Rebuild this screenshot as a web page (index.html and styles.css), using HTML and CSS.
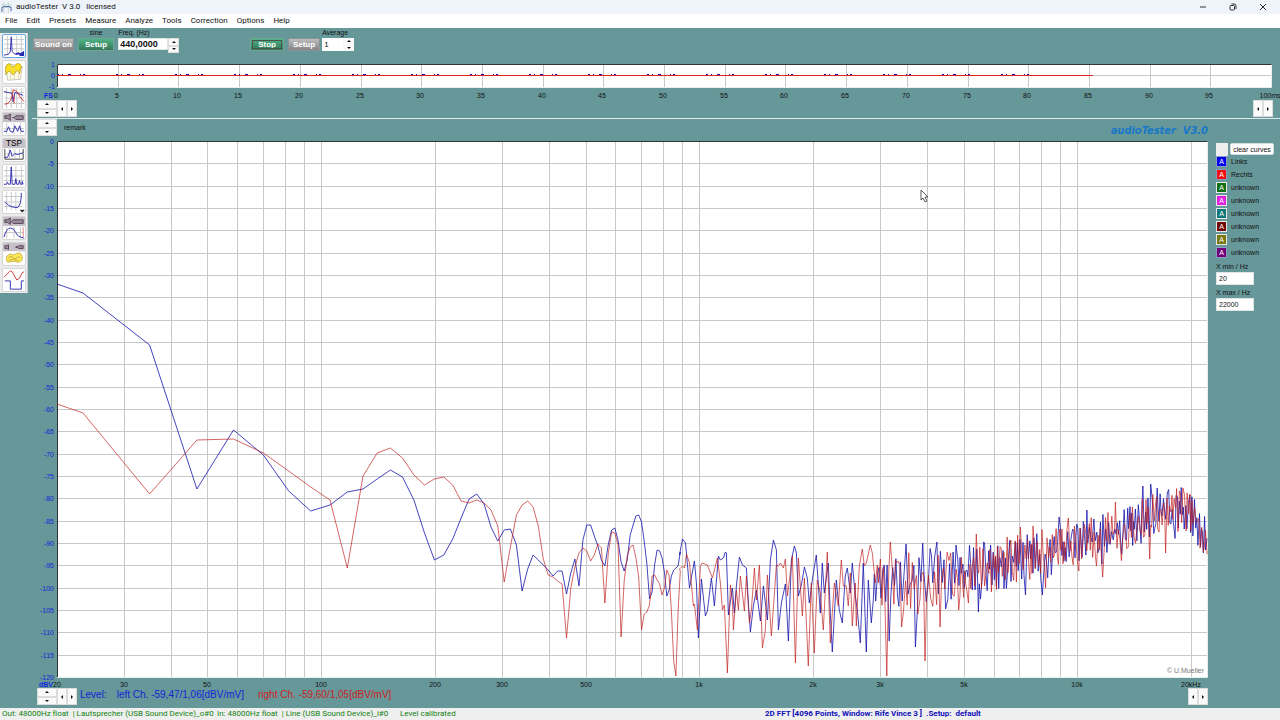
FILE: index.html
```html
<!DOCTYPE html>
<html lang="en">
    <head>
        <meta charset="UTF-8" />
        <meta name="viewport" content="width=device-width, initial-scale=1.0" />
        <title>audioTester V 3.0</title>
        <link rel="stylesheet" href="styles.css">
    </head>
    <body>
        <div class="app">
            <header class="titlebar">
                <svg class="app-logo" viewBox="0 0 12 12">
                    <path d="M0 3h12M0 6h12M3 0v12M8 0v12" stroke="#c3d8c8" />
                    <path d="M1 11V7q0-2 2-2h6q2 0 2 2v3" fill="none" stroke="#3858a8" />
                </svg>
                <h1 class="app-title">audioTester&nbsp; V 3.0&nbsp;&nbsp; licensed</h1>
                <div class="window-buttons">
                    <button aria-label="Minimize"><svg viewBox="0 0 8 8"><path d="M1 4h6" /></svg></button>
                    <button aria-label="Restore"><svg viewBox="0 0 8 8"><rect x="1" y="2.5" width="4.5" height="4.5" rx="1" /><path d="M2.5 1H5q2 0 2 2v3" /></svg></button>
                    <button aria-label="Close"><svg viewBox="0 0 8 8"><path d="M1 1l6 6M7 1l-6 6" /></svg></button>
                </div>
            </header>

            <nav class="menubar">
                <a href="#">File</a>
                <a href="#">Edit</a>
                <a href="#">Presets</a>
                <a href="#">Measure</a>
                <a href="#">Analyze</a>
                <a href="#">Tools</a>
                <a href="#">Correction</a>
                <a href="#">Options</a>
                <a href="#">Help</a>
            </nav>

            <main class="main">
                <aside class="toolbar">
                    <button class="tool tool-active" aria-label="FFT">
                        <svg viewBox="0 0 24 24">
                            <path class="grid" d="M5 1v20M15 1v20M20 1v20M1 5h22M1 10h22M1 15h22" />
                            <path class="blue" d="M1 22l5-1 2-3 1-16 1 16 3 3 3-1" />
                            <path class="blue thick" d="M14 21l3-1 2 1 3-2v3h-4" />
                        </svg>
                    </button>
                    <button class="tool" aria-label="Waterfall">
                        <svg viewBox="0 0 24 24">
                            <path d="M3 6l3-3 15 3-2 14-14 1z" fill="#fffbe0" stroke="#999" stroke-width=".6" />
                            <path d="M3 7q2-6 5-3 3 4 5 1 3-4 6-1 2 2 0 5l-1 5q-2-6-4-2-3 5-5 1-3-4-6 2z" fill="#ffe21c" stroke="#a88c00" stroke-width=".7" />
                            <path d="M9 6l-1 14M13 7l-1 13M17 14v5" stroke="#bbb" stroke-width=".6" />
                        </svg>
                    </button>
                    <button class="tool" aria-label="Impedance">
                        <svg viewBox="0 0 24 24">
                            <path class="grid" d="M4 1v22M9 1v22M15 1v22M20 1v22M1 6h22M1 12h22M1 18h22" />
                            <path class="blue" d="M1 5l9 2 1 9 2-10 9 3" />
                            <path class="red" d="M2 19q8-1 9-16 5 1 7 7l5 6" />
                            <path class="red" d="M12 9v9" />
                        </svg>
                    </button>
                    <button class="tool" aria-label="Speaker response">
                        <svg viewBox="0 0 24 24">
                            <rect class="head" width="24" height="10" />
                            <path class="device" d="M2 3h3l3-2v7L5 6H2zM10 5h2l2-2h8v4h-8l-2-2" />
                            <path class="grid" d="M4 11v12M12 11v12M19 11v12M1 17h22" />
                            <path class="blue" d="M1 20h3l2-5 2 5 3 1 2-7 3 6 2-6 2 6h3" />
                        </svg>
                    </button>
                    <button class="tool" aria-label="Thiele Small parameters">
                        <svg viewBox="0 0 24 24">
                            <rect class="head" width="24" height="10" />
                            <text x="12" y="8" text-anchor="middle">TSP</text>
                            <path d="M2 11v11h20V11" fill="none" stroke="#333" />
                            <path class="grid" d="M7 11v10M13 11v10M18 11v10M2 16h20" />
                            <path class="blue" d="M2 20h3l3-8 2 7 3-3 3 1 6-2" />
                        </svg>
                    </button>
                    <button class="tool" aria-label="Distortion">
                        <svg viewBox="0 0 24 24">
                            <path class="grid" d="M4 1v20M14 1v20M20 1v20M1 6h22M1 12h22M1 17h22" />
                            <path class="blue" d="M1 21h3l1-2 1 2h2l1-19 1 19h3l1-6 1 6h2l1-4 1 4h2v-3l1 3" />
                        </svg>
                    </button>
                    <button class="tool" aria-label="Sweep">
                        <svg viewBox="0 0 24 24">
                            <path class="grid" d="M4 1v20M9 1v20M14 1v20M1 6h20M1 12h20M1 17h20" />
                            <path class="blue" d="M2 12q4 4 7 5t7 1q4-3 4-16" />
                            <path d="M19 21h4l-2 2z" fill="#222" stroke="#222" />
                        </svg>
                    </button>
                    <button class="tool" aria-label="Frequency response">
                        <svg viewBox="0 0 24 24">
                            <rect class="head" width="24" height="10" />
                            <path class="device" d="M2 3h3l3-2v7L5 6H2zM9 5l2-2h11v4H11z" />
                            <path class="grid" d="M4 11v12M12 11v12M19 11v12M1 17h22" />
                            <path class="blue" d="M1 22q3-10 7-10t6 5 9 6" />
                            <path d="M22 11v11" stroke="#e08080" />
                        </svg>
                    </button>
                    <button class="tool" aria-label="Room waterfall">
                        <svg viewBox="0 0 24 24">
                            <rect class="head" width="24" height="9" />
                            <path class="device" d="M2 3h2l2-1v5L4 6H2zM14 4h2l1-1h5v3h-5l-1-1h-2z" />
                            <path d="M4 15q3-5 7-2l5-2q4-1 5 4t-4 6l-5-1-7 1q-2-1-1-6z" fill="#ffe85a" stroke="#b09a30" stroke-width=".7" />
                            <path d="M6 16q3-3 5 0t5-1l3 1M6 19l5-1 6 1" fill="none" stroke="#a59030" stroke-width=".7" />
                        </svg>
                    </button>
                    <button class="tool" aria-label="Oscilloscope">
                        <svg viewBox="0 0 24 24">
                            <path class="red" d="M1 9l4-4 3-3 2 1 5 9 3-2 3-6 2-1" />
                            <path class="blue" d="M2 13h6v9h12v-9h3" />
                        </svg>
                    </button>
                </aside>

                <div class="workspace">
                    <section class="controls">
                        <div class="control-group">
                            <button class="push tight">Sound on</button>
                            <div class="stack">
                                <span class="caption centered">sine</span>
                                <button class="push green">Setup</button>
                            </div>
                            <div class="stack">
                                <label class="caption" for="freq">Freq. (Hz)</label>
                                <div class="spin-field">
                                    <input class="field freq" id="freq" value="440,0000">
                                    <div class="spin">
                                        <button aria-label="Frequency up"><i class="up"></i></button>
                                        <button aria-label="Frequency down"><i class="down"></i></button>
                                    </div>
                                </div>
                            </div>
                        </div>
                        <div class="control-group">
                            <button class="push green focused">Stop</button>
                            <button class="push">Setup</button>
                            <div class="stack average">
                                <label class="caption" for="average">Average</label>
                                <div class="spin-field boxed">
                                    <input class="field" id="average" value="1">
                                    <div class="spin flat">
                                        <button aria-label="Average up"><i class="up"></i></button>
                                        <button aria-label="Average down"><i class="down"></i></button>
                                    </div>
                                </div>
                            </div>
                        </div>
                    </section>

                    <svg class="scope" id="scope" role="img" aria-label="Input signal"></svg>

                    <div class="nudges">
                        <div class="nudge-v">
                            <button aria-label="Zoom in"><i class="up"></i></button>
                            <button aria-label="Zoom out"><i class="down"></i></button>
                        </div>
                        <div class="nudge-h">
                            <button aria-label="Start left"><i class="left"></i></button>
                            <button aria-label="Start right"><i class="right"></i></button>
                        </div>
                        <div class="nudge-h end">
                            <button aria-label="End left"><i class="left"></i></button>
                            <button aria-label="End right"><i class="right"></i></button>
                        </div>
                    </div>

                    <section class="analysis">
                        <div class="spectrum-pane">
                            <div class="spectrum-head">
                                <div class="nudge-v">
                                    <button aria-label="Top up"><i class="up"></i></button>
                                    <button aria-label="Top down"><i class="down"></i></button>
                                </div>
                                <span class="remark">remark</span>
                                <span class="brand">audioTester&nbsp; V3.0</span>
                            </div>
                            <svg class="spectrum" id="spectrum" role="img" aria-label="Spectrum"></svg>
                            <div class="spectrum-foot">
                                <div class="nudge-v">
                                    <button aria-label="Bottom up"><i class="up"></i></button>
                                    <button aria-label="Bottom down"><i class="down"></i></button>
                                </div>
                                <div class="nudge-h">
                                    <button aria-label="X min left"><i class="left"></i></button>
                                    <button aria-label="X min right"><i class="right"></i></button>
                                </div>
                                <p class="level">
                                    <span>Level:</span>
                                    <span class="level-left">left Ch. -59,47/1,06[dBV/mV]</span>
                                    <span class="level-right">right Ch. -59,60/1,05[dBV/mV]</span>
                                </p>
                                <div class="nudge-h end">
                                    <button aria-label="X max left"><i class="left"></i></button>
                                    <button aria-label="X max right"><i class="right"></i></button>
                                </div>
                            </div>
                        </div>

                        <aside class="curves">
                            <div class="clear-row">
                                <span class="blank"></span>
                                <button class="clear">clear curves</button>
                            </div>
                            <ul class="curve-list">
                                <li><button class="swatch c-blue on">A</button>Links</li>
                                <li><button class="swatch c-red on">A</button>Rechts</li>
                                <li><button class="swatch c-green">A</button>unknown</li>
                                <li><button class="swatch c-magenta">A</button>unknown</li>
                                <li><button class="swatch c-teal">A</button>unknown</li>
                                <li><button class="swatch c-maroon">A</button>unknown</li>
                                <li><button class="swatch c-olive">A</button>unknown</li>
                                <li><button class="swatch c-purple on">A</button>unknown</li>
                            </ul>
                            <label class="limit">X min / Hz<input class="field" value="20"></label>
                            <label class="limit">X max / Hz<input class="field" value="22000"></label>
                        </aside>
                    </section>
                </div>
            </main>

            <footer class="statusbar">
                <span>Out: 48000Hz float&nbsp; | Lautsprecher (USB Sound Device)_o#0</span>
                <span>In: 48000Hz float&nbsp; | Line (USB Sound Device)_i#0</span>
                <span>Level calibrated</span>
                <span class="status-setup">2D FFT [4096 Points, Window: Rife Vince 3 ]&nbsp; .Setup:&nbsp; default</span>
            </footer>
        </div>

        <svg class="cursor" viewBox="0 0 9 14">
            <path d="M1 1v10l2-2 2 4 2-1-2-4h3z" fill="#fff" stroke="#333" stroke-width=".8" />
        </svg>

        <script src="script.js"></script>
    </body>
</html>
```
FILE: styles.css
```css
* {
    box-sizing: border-box;
}

body {
    margin: 0;
    font-family: "Liberation Sans", Arial, sans-serif;
    font-size: 7px;
    color: #111;
}

button,
input {
    font: inherit;
    color: inherit;
    margin: 0;
    padding: 0;
    border: 0;
    border-radius: 0;
}

.app {
    display: flex;
    flex-direction: column;
    height: 100vh;
    background: #669799;
    overflow: hidden;
}

/* title and menu */
.titlebar {
    display: flex;
    align-items: center;
    height: 14px;
    padding: 0 10px 0 1px;
    background: #eff3fa;
}

.app-logo {
    width: 11px;
    height: 11px;
}

.app-title {
    flex: 1;
    margin: 0 0 0 4px;
    font: 400 8px/14px Roboto, "Noto Sans", sans-serif;
}

.window-buttons {
    display: flex;
    gap: 16px;
}

.window-buttons button {
    width: 14px;
    height: 12px;
    background: none;
}

.window-buttons svg {
    display: block;
    width: 8px;
    height: 8px;
    margin: auto;
    fill: none;
    stroke: #333;
}

.menubar {
    display: flex;
    gap: 9px;
    height: 14px;
    padding-left: 5px;
    background: #fff;
    font: 400 8px/14px Roboto, "Noto Sans", sans-serif;
}

.menubar a {
    color: #111;
    text-decoration: none;
}

.main {
    display: flex;
    align-items: flex-start;
    flex: 1;
    min-height: 0;
}

/* left toolbar */
.toolbar {
    display: flex;
    flex-direction: column;
    gap: 2px;
    width: 28px;
    margin-top: 5px;
    padding: 1px 2px;
    background: #ececec;
    border-right: 1px solid #c5cfcf;
}

.tool {
    width: 24px;
    height: 24px;
    background: #fff;
    border: 1px solid #d6d6d6;
    border-radius: 2px;
}

.tool-active {
    border-color: #6aa5dc;
}

.tool svg {
    display: block;
    width: 22px;
    height: 22px;
}

.tool path {
    fill: none;
}

.tool path[fill] {
    fill: revert-layer;
}

.tool text {
    font-size: 9px;
}

.tool .grid {
    stroke: #c4c4c4;
}

.tool .blue {
    stroke: #2a2ab0;
}

.tool .thick {
    stroke-width: 2;
}

.tool .red {
    stroke: #cc3030;
}

.tool .head {
    fill: #c6c0c8;
}

.tool .device {
    fill: #9a8a9a;
    stroke: #544054;
}

.workspace {
    display: flex;
    flex-direction: column;
    flex: 1;
    align-self: stretch;
    min-width: 0;
    padding-left: 4px;
}

/* generator and measure controls */
.controls {
    display: flex;
    gap: 70px;
    height: 26px;
}

.control-group {
    display: flex;
    gap: 4px;
    padding-top: 10px;
    padding-left: 1px;
}

.stack {
    display: flex;
    flex-direction: column;
    margin-top: -10px;
}

.average {
    margin-left: -2px;
}

.caption {
    height: 10px;
    line-height: 10px;
    white-space: nowrap;
}

.centered {
    text-align: center;
}

.push {
    height: 13px;
    padding: 0 4px;
    background: linear-gradient(#bdbdbd, #858585);
    border: 1px solid #8b9494;
    color: #fff;
    font-size: 8px;
    font-weight: 700;
    line-height: 11px;
}

.push.tight {
    padding: 0 1px;
}

.push.green {
    padding: 0 6px;
    background: linear-gradient(#4fb284, #35775a);
    border-color: #6fa594;
}

.push.focused {
    padding: 0 7px;
    outline: 1px solid #49544f;
    outline-offset: -3px;
}

.spin-field {
    display: flex;
}

.field {
    width: 38px;
    height: 13px;
    padding: 0 2px;
    background: #fff;
    border: 1px solid #dfe5e5;
}

.freq {
    width: 50px;
    height: 12px;
    padding: 0 1px;
    font-size: 9px;
    font-weight: 700;
}

.spin {
    width: 11px;
    height: 15px;
    background: #fff;
}

.boxed .field {
    width: 21px;
    border: 0;
    font-size: 8px;
}

.boxed {
    background: #fff;
}

.boxed .spin {
    height: 13px;
}

.spin button,
.nudge-v button,
.nudge-h button {
    display: flex;
    align-items: center;
    justify-content: center;
    background: #fafafa;
    border: 1px solid #dcdcdc;
}

.spin button {
    width: 100%;
    height: 50%;
}

.spin.flat button {
    border: 0;
}

/* arrow glyphs */
.up,
.down,
.left,
.right {
    width: 0;
    height: 0;
    border: 2px solid transparent;
}

.up {
    border-top: 0;
    border-bottom-color: #111;
}

.down {
    border-bottom: 0;
    border-top-color: #111;
}

.left {
    border-left: 0;
    border-right-color: #111;
}

.right {
    border-right: 0;
    border-left-color: #111;
}

.scope {
    display: block;
    width: 100%;
    height: 46px;
    overflow: visible;
}

.nudges {
    display: flex;
    height: 19px;
    padding: 0 7px 0 5px;
    border-bottom: 1px solid #dde8e8;
}

.nudge-v {
    width: 20px;
    height: 17px;
}

.nudge-v button {
    width: 100%;
    height: 50%;
}

.nudge-h {
    display: flex;
    width: 20px;
    height: 17px;
}

.nudge-h button {
    flex: 1;
}

.end {
    margin-left: auto;
}

/* spectrum */
.analysis {
    display: flex;
    flex: 1;
    min-height: 0;
}

.spectrum-pane {
    display: flex;
    flex-direction: column;
    flex: 1;
    min-width: 0;
}

.spectrum-head {
    display: flex;
    height: 18px;
    padding: 0 3px 0 5px;
    line-height: 17px;
}

.remark {
    padding-left: 7px;
}

.brand {
    margin-left: auto;
    color: #1878c8;
    font: italic 700 11px/24px "DejaVu Sans Condensed", "DejaVu Sans", sans-serif;
}

.spectrum {
    display: block;
    flex: 1;
    width: 100%;
    min-height: 0;
    overflow: visible;
}

.spectrum-foot {
    display: flex;
    height: 20px;
    padding: 0 3px 0 5px;
}

.level {
    display: flex;
    margin: 0;
    padding-left: 3px;
    color: #1525d8;
    font-size: 10px;
    line-height: 13px;
    white-space: nowrap;
}

.level-left {
    padding-left: 10px;
}

.level-right {
    padding-left: 14px;
    color: #cc2222;
}

.plot-bg {
    fill: #fff;
}

.plot-grid {
    stroke: #c8c8c8;
    fill: none;
}

.plot-edge-dark {
    stroke: #333;
    fill: none;
}

.plot-edge-light {
    stroke: #e6eeee;
    fill: none;
}

.trace {
    fill: none;
    stroke-linejoin: bevel;
    stroke-width: 0.8;
}

.trace-left {
    stroke: #1414ac;
}

.trace-right {
    stroke: #c01c1c;
    stroke-opacity: 0.85;
}

.scope .trace {
    stroke-width: 1;
    stroke-opacity: 1;
}

.scope .trace-right {
    stroke: #e02020;
}

.tick-y {
    fill: #1428dc;
    text-anchor: end;
}

.tick-x {
    fill: #111;
    text-anchor: middle;
}

.unit {
    font-weight: 700;
}

.copyright {
    fill: #777;
    text-anchor: end;
}

/* curve selection */
.curves {
    width: 69px;
    padding: 24px 6px 0 5px;
}

.clear-row {
    display: flex;
    gap: 2px;
    height: 13px;
}

.blank {
    width: 12px;
    background: #eee;
}

.clear {
    flex: 1;
    height: 12px;
    background: #fff;
    border: 1px solid #d4dcdc;
    border-radius: 2px;
    white-space: nowrap;
}

.curve-list {
    display: flex;
    flex-direction: column;
    margin: 0 0 2px;
    padding: 0;
    list-style: none;
}

.curve-list li {
    display: flex;
    gap: 4px;
    height: 13px;
    line-height: 11px;
}

.swatch {
    width: 11px;
    height: 11px;
    border: 1px solid #e8e8e8;
    color: #fff;
    line-height: 9px;
}

.swatch.on {
    border-color: #8a9cc0;
}

.c-blue {
    background: #0000f0;
}

.c-red {
    background: #f01010;
}

.c-green {
    background: #107010;
}

.c-magenta {
    background: #e020e0;
}

.c-teal {
    background: #107878;
}

.c-maroon {
    background: #700808;
}

.c-olive {
    background: #787810;
}

.c-purple {
    background: #700078;
}

.limit {
    display: block;
    height: 26px;
    line-height: 10px;
}

.limit .field {
    display: block;
}

.statusbar {
    display: grid;
    grid-template-columns: 215fr 183fr 365fr 517fr;
    height: 12px;
    background: #efefef;
    color: #108010;
    font: 400 8px/12px Roboto, "Noto Sans", sans-serif;
    white-space: nowrap;
}

.statusbar span {
    min-width: 0;
    padding-left: 2px;
}

.statusbar .status-setup {
    color: #1010b8;
    font-weight: 700;
}

.cursor {
    position: absolute;
    top: 189px;
    left: 71.9%;
    width: 9px;
    height: 14px;
}
```
FILE: script.js
```js
const NS = "http://www.w3.org/2000/svg";

// traces are stored in plot units: 1151 wide (20 Hz - 22 kHz), 536 high (0 - -120 dB)
const UNITS_X = 1151;
const UNITS_Y = 536;
const DECADE = 378.4;
const BIN = 48000 / 4096;

// one value for each FFT bin, starting at bin 2
const leftBins = [
    152, 204, 348, 289, 314, 350, 370, 364, 351, 348, 338, 329, 336, 359, 392,
    419, 414, 398, 377, 358, 353, 363, 386, 400, 389, 388, 404, 450, 428, 414,
    419, 424, 429, 435, 430, 430, 453, 432, 418, 445, 399, 384, 384, 395, 405,
    419, 425, 404, 389, 387, 399, 421, 430, 419, 394, 384, 375, 374, 381, 400,
    423, 458, 451, 424, 409, 410, 417, 431, 455, 449, 435, 429, 427, 425, 411
];
const rightBins = [
    272, 353, 299, 298, 312, 330, 346, 359, 427, 335, 312, 307, 317, 334, 344,
    338, 336, 344, 360, 362, 359, 362, 369, 385, 441, 406, 374, 364, 360, 366,
    385, 418, 434, 436, 440, 443, 497, 447, 426, 412, 407, 410, 420, 414, 403,
    407, 462, 413, 391, 392, 404, 496, 440, 415, 406, 404, 417, 436, 489, 473,
    471, 464, 435, 434, 439, 443, 454, 447, 429, 434, 470, 520, 535, 470, 430
];

// [x, y] pairs of the mid range
const leftMid = [
    [623, 414], [626, 398], [629, 402], [633, 447], [638, 420], [640, 442],
    [642, 497], [645, 438], [649, 475], [651, 470], [655, 437], [658, 465],
    [662, 415], [664, 419], [667, 417], [669, 411], [670, 412], [672, 474],
    [676, 447], [678, 472], [680, 445], [683, 416], [686, 424], [690, 427],
    [692, 462], [694, 491], [697, 465], [700, 449], [704, 480], [707, 445],
    [711, 479], [714, 419], [717, 399], [720, 409], [722, 489], [725, 462],
    [729, 443], [732, 500], [735, 419], [738, 405], [740, 412], [742, 455],
    [745, 444], [748, 426], [751, 437], [753, 462], [756, 439], [760, 414],
    [764, 472], [766, 422], [768, 452], [772, 422], [774, 472], [776, 511],
    [780, 439], [783, 469], [786, 482], [789, 435], [791, 427], [794, 452],
    [796, 422], [799, 455], [801, 469], [804, 502], [807, 422], [810, 511],
    [812, 439], [815, 482], [817, 459]
];
const rightMid = [
    [623, 428], [626, 425], [628, 427], [630, 413], [633, 422], [637, 465],
    [638, 463], [641, 489], [644, 425], [646, 422], [651, 424], [656, 437],
    [661, 417], [664, 442], [666, 469], [668, 464], [671, 532], [674, 444],
    [676, 459], [677, 489], [680, 449], [682, 469], [684, 435], [688, 470],
    [690, 435], [693, 482], [695, 469], [698, 427], [700, 459], [703, 424],
    [706, 507], [709, 489], [711, 434], [715, 495], [720, 424], [722, 425],
    [724, 422], [727, 427], [729, 418], [731, 455], [736, 415], [739, 522],
    [742, 417], [746, 475], [748, 437], [752, 525], [755, 442], [758, 512],
    [761, 439], [764, 452], [767, 489], [771, 411], [774, 502], [778, 442],
    [782, 465], [785, 419], [787, 445], [790, 445], [792, 465], [794, 432],
    [796, 485], [799, 442], [800, 485], [803, 425], [806, 408], [808, 425],
    [810, 422], [814, 404], [816, 412], [819, 442], [821, 424]
];

// single peaks standing out of the noise, [x, y]
const leftPeaks = [
    [831, 500], [849, 403], [858, 506], [866, 402], [879, 401], [889, 468],
    [899, 404], [922, 471], [927, 401], [969, 454], [985, 454], [1002, 376],
    [1030, 369], [1065, 413], [1086, 345], [1094, 343], [1101, 347],
    [1110, 352], [1133, 354], [1147, 412]
];
const rightPeaks = [
    [824, 418], [829, 535], [834, 401], [844, 486], [868, 520], [883, 486],
    [893, 412], [902, 469], [912, 462], [919, 393], [934, 451], [964, 386],
    [976, 385], [989, 447], [1012, 377], [1022, 430], [1040, 425],
    [1046, 436], [1059, 361], [1093, 418], [1109, 412], [1122, 350]
];

// centre line of the noise
const floor = [[817, 448], [860, 440], [920, 428], [960, 420], [1000, 410], [1040, 397], [1080, 383], [1100, 373], [1125, 368], [1137, 374], [1151, 398]];

function floorAt(x) {
    let i = 1;
    while (i < floor.length - 1 && floor[i][0] < x) i++;
    const [x0, y0] = floor[i - 1];
    const [x1, y1] = floor[i];
    return y0 + ((y1 - y0) * (x - x0)) / (x1 - x0);
}

function noise(seed, from, peaks) {
    let s = seed;
    const random = () => {
        s = (s * 16807) % 2147483647;
        return s / 2147483647;
    };
    const points = [];
    const rest = [...peaks];
    let side = 1;
    for (let x = from; x < UNITS_X; x += (x < 900 ? 1.3 : 0.8) + random() * 0.9) {
        if (rest.length && rest[0][0] <= x) {
            points.push([x, rest.shift()[1]]);
            continue;
        }
        const size = x < 880 ? 34 : x < 1000 ? 26 : 22;
        // swing around the centre line, with a longer tail to the bottom
        if (random() < 0.8) side = -side;
        const swing = side * random() * (side > 0 && random() < 0.15 ? 1.5 : 1);
        points.push([x, floorAt(x) + swing * size]);
    }
    return points;
}

function binPoints(bins) {
    return bins.map((y, i) => [Math.log10(((i + 2) * BIN) / 20) * DECADE, y]);
}

const leftTrace = [[0, 143], ...binPoints(leftBins), ...leftMid, ...noise(4177, 818, leftPeaks)];
const rightTrace = [[0, 263], ...binPoints(rightBins), ...rightMid, ...noise(90211, 822, rightPeaks)];

function add(parent, name, attrs, text) {
    const node = document.createElementNS(NS, name);
    for (const key in attrs) node.setAttribute(key, attrs[key]);
    if (text !== undefined) node.textContent = text;
    parent.appendChild(node);
}

function frame(svg, x, y, w, h, grid) {
    add(svg, "rect", { class: "plot-bg", x, y, width: w, height: h });
    add(svg, "path", { class: "plot-grid", d: grid });
    add(svg, "path", { class: "plot-edge-light", d: `M${x} ${y + h + 0.5}h${w + 0.5}v${-h}` });
    add(svg, "path", { class: "plot-edge-dark", d: `M${x + 0.5} ${y + h}v${-h + 0.5}h${w}` });
}

function drawScope() {
    const svg = document.getElementById("scope");
    svg.replaceChildren();
    const x = 25, y = 10, h = 23;
    const w = svg.clientWidth - x - 9;
    const at = (ms) => Math.round(x + (w * ms) / 100);

    let grid = `M${x} ${y + 11.5}h${w}`;
    for (let ms = 5; ms < 100; ms += 5) grid += `M${at(ms) + 0.5} ${y}v${h}`;
    frame(svg, x, y, w, h, grid);

    add(svg, "path", { class: "trace trace-left", "stroke-dasharray": "2 3 1 5 3 9 1 2 2 31", d: `M${x} ${y + 10.5}H${at(81)}` });
    add(svg, "path", { class: "trace trace-right", d: `M${x} ${y + 11.5}H${at(85.3)}` });

    add(svg, "text", { class: "tick-y", x: x - 2, y: y + 3 }, "1");
    add(svg, "text", { class: "tick-y", x: x - 2, y: y + 14 }, "0");
    add(svg, "text", { class: "tick-y", x: x - 2, y: y + 25 }, "-1");
    add(svg, "text", { class: "tick-y unit", x: x - 4, y: y + 34 }, "FS");
    for (let ms = 0; ms <= 100; ms += 5) {
        add(svg, "text", { class: "tick-x", x: at(ms) - 1, y: y + 34 }, ms === 100 ? "100ms" : ms);
    }
}

function drawSpectrum() {
    const svg = document.getElementById("spectrum");
    svg.replaceChildren();
    const x = 25, y = 4;
    const w = svg.clientWidth - x - 4;
    const h = svg.clientHeight - y - 11;
    const atHz = (hz) => Math.round(x + (Math.log10(hz / 20) * DECADE * w) / UNITS_X);
    const atDb = (db) => Math.round(y - (db * h) / 120);

    let grid = "";
    for (let db = -5; db > -120; db -= 5) grid += `M${x} ${atDb(db) + 0.5}h${w}`;
    for (let decade = 10; decade <= 10000; decade *= 10) {
        for (let n = 1; n < 10; n++) {
            const hz = decade * n;
            if (hz > 20 && hz <= 20000) grid += `M${atHz(hz) + 0.5} ${y}v${h}`;
        }
    }
    frame(svg, x, y, w, h, grid);

    const path = (points) => "M" + points
        .map(([px, py]) => `${(x + (px * w) / UNITS_X).toFixed(1)} ${(y + (py * h) / UNITS_Y).toFixed(1)}`)
        .join("L");
    add(svg, "path", { class: "trace trace-left", d: path(leftTrace) });
    add(svg, "path", { class: "trace trace-right", d: path(rightTrace) });

    for (let db = 0; db >= -120; db -= 5) {
        add(svg, "text", { class: "tick-y", x: x - 3, y: atDb(db) + 3 }, db);
    }
    const labels = { 20: "20", 30: "30", 50: "50", 100: "100", 200: "200", 300: "300", 500: "500", 1000: "1k", 2000: "2k", 3000: "3k", 5000: "5k", 10000: "10k", 20000: "20kHz" };
    for (const hz in labels) {
        add(svg, "text", { class: "tick-x", x: atHz(hz), y: y + h + 10 }, labels[hz]);
    }
    add(svg, "text", { class: "tick-y unit", x: x - 4, y: y + h + 10 }, "dBV");
    add(svg, "text", { class: "copyright", x: x + w - 3, y: y + h - 4 }, "© U.Mueller");
}

function draw() {
    drawScope();
    drawSpectrum();
}

window.addEventListener("resize", draw);
draw();
```
